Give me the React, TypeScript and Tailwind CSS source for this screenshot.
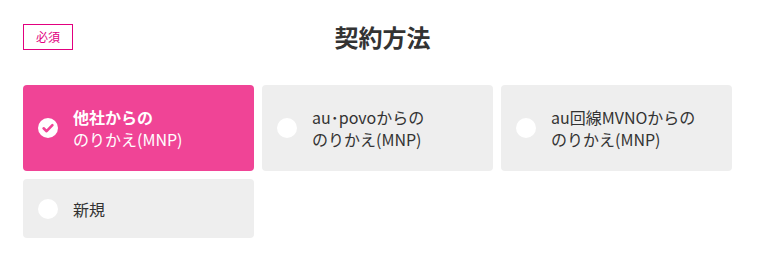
import React, { useState } from 'react';

const options = [
  { id: 'mnp', lines: ['他社からの', 'のりかえ(MNP)'] },
  { id: 'povo', lines: ['au･povoからの', 'のりかえ(MNP)'] },
  { id: 'mvno', lines: ['au回線MVNOからの', 'のりかえ(MNP)'] },
  { id: 'new', lines: ['新規'] },
];

const CheckCircle = () => (
  <svg width="20" height="20" viewBox="0 0 20 20" className="shrink-0">
    <circle cx="10" cy="10" r="10" fill="#fff" />
    <path d="M5.6 10.3 L8.6 13.2 L14.4 7.2" fill="none" stroke="#f04496" strokeWidth="2.6" strokeLinecap="round" strokeLinejoin="round" />
  </svg>
);

export default function App() {
  const [selected, setSelected] = useState('mnp');

  return (
    <div className="w-[764px] h-[260px] bg-white pl-[23px] pr-[32px] pt-[24px] font-['Noto_Sans_CJK_JP','Noto_Sans',sans-serif] text-[#333]">
      <div className="relative h-[26px] flex items-center justify-center">
        <span className="absolute left-0 top-0 w-[50px] h-[26px] border border-[#e2007f] text-[#e2007f] text-[12px] flex items-center justify-center leading-none">
          必須
        </span>
        <h2 className="ml-[10px] text-[24px] font-bold leading-none">契約方法</h2>
      </div>

      <div className="mt-[35px] grid grid-cols-3 gap-[8px]">
        {options.map((o) => {
          const active = selected === o.id;
          const tall = o.lines.length > 1;
          return (
            <button
              key={o.id}
              onClick={() => setSelected(o.id)}
              className={`flex items-center gap-[15px] pl-[15px] rounded-[4px] text-left ${tall ? 'h-[86px]' : 'h-[59px]'} ${active ? 'bg-[#f04496] text-white' : 'bg-[#eeeeee] text-[#333]'}`}
            >
              {active ? <CheckCircle /> : <span className="w-[20px] h-[20px] rounded-full bg-white shrink-0" />}
              <span className="text-[16px] leading-[22px]">
                {o.lines.map((l, i) => (
                  <span key={i} className={`block ${active && i === 0 ? 'font-bold' : ''}`}>{l}</span>
                ))}
              </span>
            </button>
          );
        })}
      </div>
    </div>
  );
}
